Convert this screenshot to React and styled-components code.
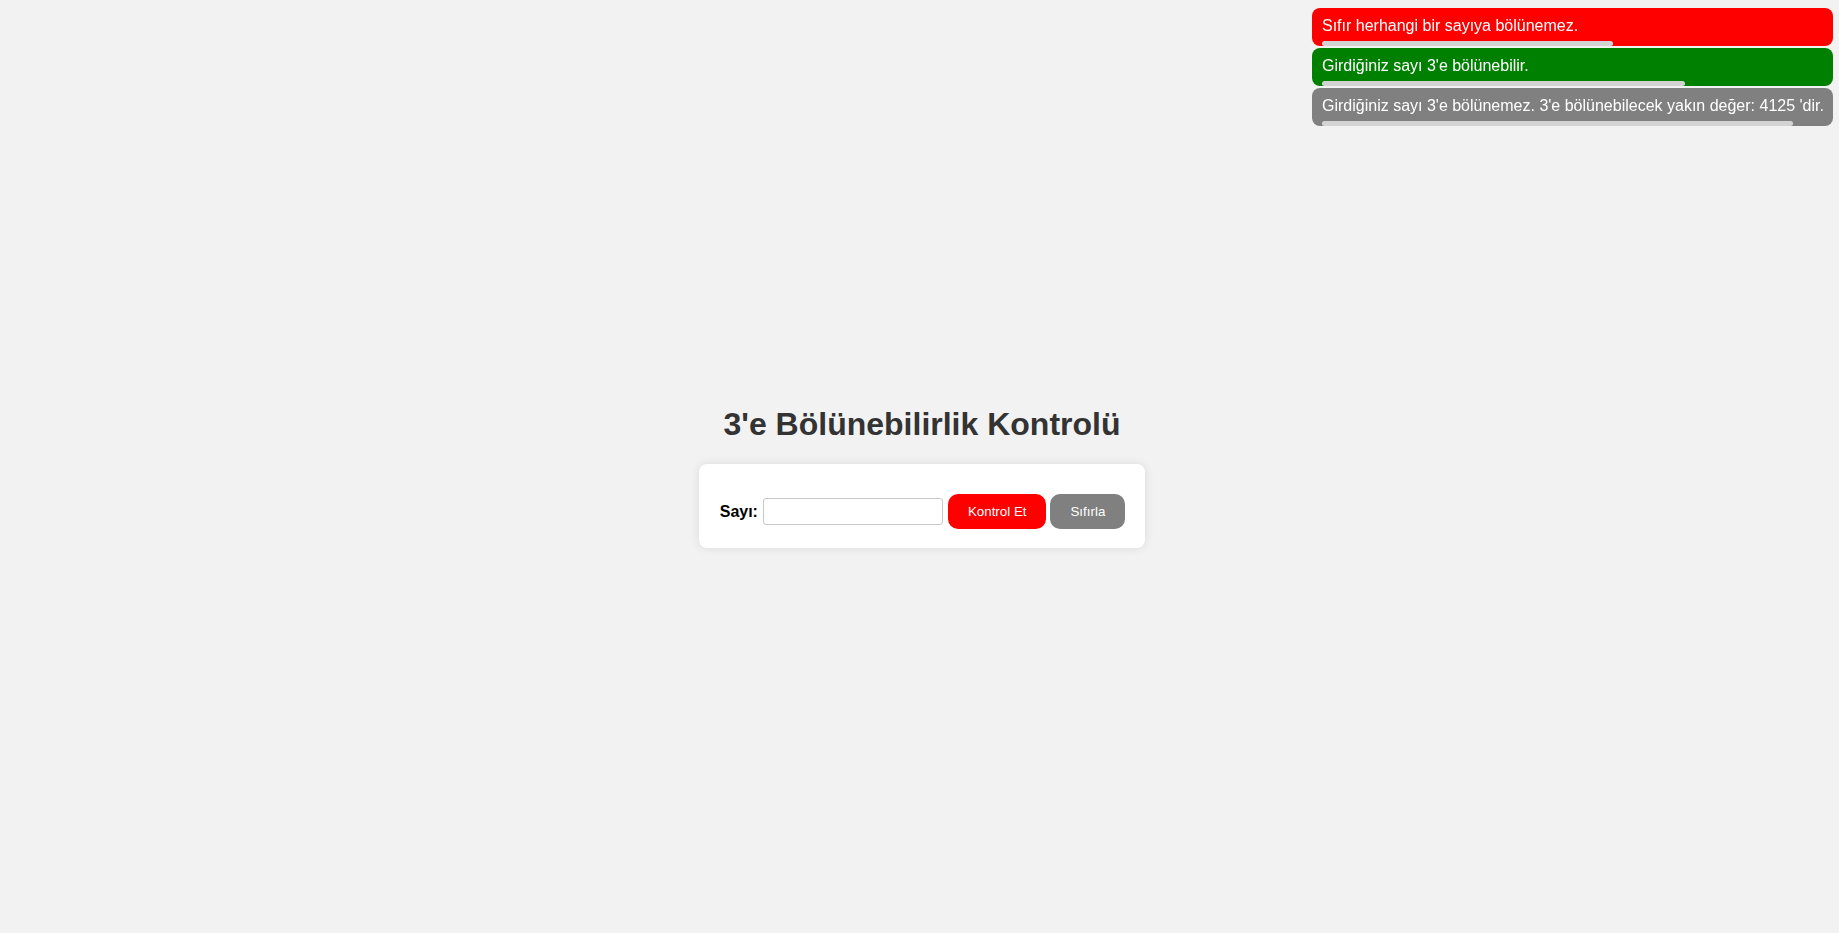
import React from "react";
import styled, { createGlobalStyle } from "styled-components";

const toasts = [
  { id: 1, type: "error", text: "Sıfır herhangi bir sayıya bölünemez.", progress: 58.1 },
  { id: 2, type: "success", text: "Girdiğiniz sayı 3'e bölünebilir.", progress: 72.5 },
  { id: 3, type: "info", text: "Girdiğiniz sayı 3'e bölünemez. 3'e bölünebilecek yakın değer: 4125 'dir.", progress: 94 },
];

const App = () => {
  const [value, setValue] = React.useState("");

  return (
    <>
      <GlobalStyle />
      <Page>
        <Title>3'e Bölünebilirlik Kontrolü</Title>
        <Card>
          <Label htmlFor="sayi">Sayı:</Label>
          <NumberInput id="sayi" type="text" value={value} onChange={(e) => setValue(e.target.value)} />
          <Button variant="check">Kontrol Et</Button>
          <Button variant="reset" onClick={() => setValue("")}>Sıfırla</Button>
        </Card>
      </Page>
      <ToastStack>
        {toasts.map((t) => (
          <Toast key={t.id} kind={t.type}>
            <ToastText>{t.text}</ToastText>
            <ProgressBar style={{ width: `${t.progress}%` }} />
          </Toast>
        ))}
      </ToastStack>
    </>
  );
};

const GlobalStyle = createGlobalStyle`
  html, body {
    margin: 0;
    padding: 0;
    background-color: #f2f2f2;
    font-family: "Liberation Sans", Arial, sans-serif;
  }
`;

const Page = styled.div`
  display: flex;
  flex-direction: column;
  align-items: center;
  justify-content: center;
  height: 100vh;
  padding-left: 5px;
  box-sizing: border-box;
`;

const Title = styled.h1`
  font-size: 32px;
  font-weight: bold;
  color: #333;
  margin: 21px 0;
`;

const Card = styled.div`
  display: flex;
  align-items: center;
  background-color: #fff;
  border-radius: 8px;
  box-shadow: 0 0 10px rgba(0, 0, 0, 0.1);
  padding: 30px 20px 19px 21px;
`;

const Label = styled.label`
  font-size: 16px;
  font-weight: bold;
  color: #000;
  margin-right: 5px;
`;

const NumberInput = styled.input`
  box-sizing: border-box;
  width: 180px;
  height: 27px;
  border: 1px solid #c8c8c8;
  border-radius: 3px;
  padding: 2px 6px;
  font-size: 14px;
  font-family: "Liberation Sans", Arial, sans-serif;
  margin-right: 5px;
  &:focus {
    outline: none;
  }
`;

const Button = styled.button`
  box-sizing: border-box;
  height: 35px;
  padding: 0 20px;
  border: 0;
  border-radius: 10px;
  color: #fff;
  font-size: 13.33px;
  font-family: "Liberation Sans", Arial, sans-serif;
  cursor: pointer;
  margin-right: 4px;
  background-color: ${(props) => (props.variant === "check" ? "#ff0000" : "#808080")};
  &:last-child {
    margin-right: 0;
  }
`;

const ToastStack = styled.div`
  position: fixed;
  top: 8px;
  right: 6px;
  width: 521px;
  display: flex;
  flex-direction: column;
  gap: 2px;
`;

const Toast = styled.div`
  box-sizing: border-box;
  height: 38px;
  padding: 9px 10px 0;
  border-radius: 8px;
  color: #fff;
  display: flex;
  flex-direction: column;
  background-color: ${(props) =>
    props.kind === "error" ? "#ff0000" : props.kind === "success" ? "#008000" : "#808080"};
`;

const ToastText = styled.div`
  font-size: 16px;
  line-height: 18px;
  white-space: nowrap;
`;

const ProgressBar = styled.div`
  height: 5px;
  margin-top: 6px;
  background-color: #d3d3d3;
  border-radius: 3px;
`;

export default App;
